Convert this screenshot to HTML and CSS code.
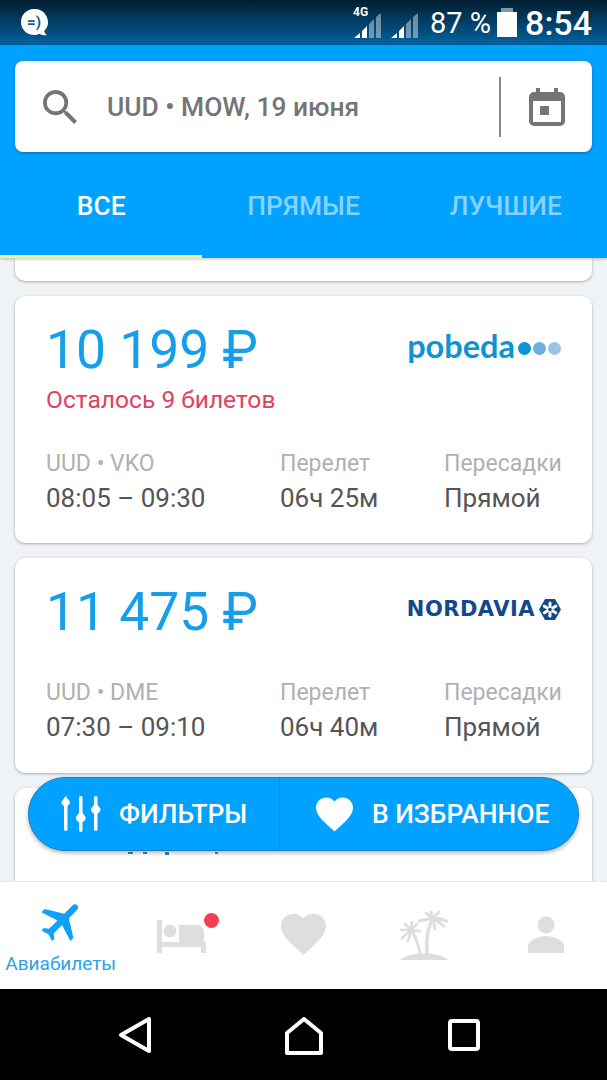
FILE: index.html
```html
<!DOCTYPE html>
<html lang="ru">
<head>
  <meta charset="UTF-8" />
  <meta name="viewport" content="width=device-width, initial-scale=1.0"/>
  <title>Авиабилеты</title>
  <link rel="stylesheet" href="styles.css">
</head>
<body>

  <div class="screen">

    <div class="status-bar">
      <svg class="bot-icon" width="30" height="30" viewBox="0 0 30 30">
        <path d="M14 1a13 13 0 1 0 0 26c2 0 4-.4 5.500-1.200 1.800 1.200 4.500 1.700 7.500 1.400-1.500-1-2.500-2.500-2.800-4.200A13 13 0 0 0 14 1z" fill="#fff"/>
        <text x="14" y="19" text-anchor="middle" class="bot-face">=)</text>
      </svg>
      <div class="status-right">
        <div class="signal signal-4g">
          <span class="net-type">4G</span>
          <svg width="30" height="27" viewBox="0 0 30 27">
            <path d="M1 26l6-5v5zM9 26v-7l5-5v12z" fill="#fff"/>
            <path d="M16 26V12l5-5v19zM23 26V5l5-4v25z" fill="#fff" opacity=".42"/>
          </svg>
        </div>
        <svg class="signal" width="30" height="27" viewBox="0 0 30 27">
          <path d="M1 26l6-5v5zM9 26v-7l5-5v12z" fill="#fff"/>
          <path d="M16 26V12l5-5v19zM23 26V5l5-4v25z" fill="#fff" opacity=".42"/>
        </svg>
        <span class="battery-text">87 %</span>
        <div class="battery"></div>
        <span class="clock">8:54</span>
      </div>
    </div>

    <div class="top-panel">
      <div class="search-box">
        <svg class="search-icon" width="34" height="34" viewBox="3 3 17.500 17.500">
          <path d="M15.500 14h-.79l-.28-.27A6.471 6.471 0 0 0 16 9.500 6.500 6.500 0 1 0 9.500 16c1.610 0 3.090-.59 4.230-1.570l.27.28v.79l5 4.990L20.490 19l-4.990-5zm-6 0C7.010 14 5 11.990 5 9.500S7.010 5 9.500 5 14 7.010 14 9.500 11.990 14 9.500 14z" fill="#757575"/>
        </svg>
        <div class="search-text">UUD • MOW, 19 июня</div>
        <div class="calendar-btn">
          <svg width="36" height="38" viewBox="0 0 36 38">
            <path d="M7 0h4v4h14V0h4v4h2a5 5 0 0 1 5 5v24a5 5 0 0 1-5 5H5a5 5 0 0 1-5-5V9a5 5 0 0 1 5-5h2z" fill="#757575"/>
            <rect x="4" y="13" width="28" height="21" fill="#fff"/>
            <rect x="11" y="18" width="9" height="9" fill="#757575"/>
          </svg>
        </div>
      </div>
      <div class="tabs">
        <div class="tab active">ВСЕ</div>
        <div class="tab">ПРЯМЫЕ</div>
        <div class="tab">ЛУЧШИЕ</div>
      </div>
    </div>

    <div class="list">
      <div class="card card-stub"></div>

      <div class="card">
        <div class="card-top">
          <div class="price">10 199 ₽</div>
          <div class="logo-pobeda">
            <span class="pobeda-name">pobeda</span>
            <span class="dot dot-1"></span>
            <span class="dot dot-2"></span>
            <span class="dot dot-3"></span>
          </div>
        </div>
        <div class="seats-left">Осталось 9 билетов</div>
        <div class="flight-info">
          <div>
            <div class="info-label">UUD • VKO</div>
            <div class="info-value">08:05 – 09:30</div>
          </div>
          <div>
            <div class="info-label">Перелет</div>
            <div class="info-value">06ч 25м</div>
          </div>
          <div>
            <div class="info-label">Пересадки</div>
            <div class="info-value">Прямой</div>
          </div>
        </div>
      </div>

      <div class="card">
        <div class="card-top">
          <div class="price">11 475 ₽</div>
          <div class="logo-nordavia">
            <span class="nordavia-name">NORDAVIA</span>
            <svg width="22" height="21" viewBox="0 0 22 21">
              <path d="M6 0h10l6 10.500L16 21H6L0 10.500z" fill="#12498a"/>
              <g stroke="#fff" stroke-width="3" stroke-linecap="round">
                <path d="M11 4v3.500M11 13.500V17M5.300 7.200l3 1.800M13.700 12l3 1.800M5.300 13.800l3-1.800M13.700 9l3-1.800"/>
              </g>
            </svg>
          </div>
        </div>
        <div class="flight-info">
          <div>
            <div class="info-label">UUD • DME</div>
            <div class="info-value">07:30 – 09:10</div>
          </div>
          <div>
            <div class="info-label">Перелет</div>
            <div class="info-value">06ч 40м</div>
          </div>
          <div>
            <div class="info-label">Пересадки</div>
            <div class="info-value">Прямой</div>
          </div>
        </div>
      </div>

      <div class="card card-cut">
        <svg class="cut-text" width="110" height="6" viewBox="0 0 110 6">
          <path d="M0 0h5v2H0zM15 0h4v2h-4zM37 0h4v3h-4zM87 0h3v2h-3z" fill="#3f86bb"/>
        </svg>
      </div>
    </div>

    <div class="fab">
      <div class="fab-part fab-filters">
        <svg width="40" height="36" viewBox="0 0 40 36">
          <g fill="#fff">
            <rect x="3" y="8" width="3.500" height="27" rx="1.700"/>
            <path d="M4.700 0 9 6a4.300 4.300 0 0 1-8.600 0z"/>
            <rect x="18" y="0" width="3.500" height="36" rx="1.700"/>
            <path d="M19.700 14l5 7.500a5 5 0 0 1-10 0z"/>
            <rect x="33" y="0" width="3.500" height="35" rx="1.700"/>
            <path d="M34.700 6l4.800 7a4.800 4.800 0 0 1-9.600 0z"/>
          </g>
        </svg>
        <span class="fab-label">ФИЛЬТРЫ</span>
      </div>
      <div class="fab-part fab-favorites">
        <svg width="37" height="35" viewBox="2 3 20 18.350">
          <path d="M12 21.350l-1.450-1.320C5.400 15.360 2 12.280 2 8.500 2 5.420 4.420 3 7.500 3c1.740 0 3.410.81 4.500 2.090C13.090 3.810 14.760 3 16.500 3 19.580 3 22 5.420 22 8.500c0 3.780-3.400 6.860-8.550 11.540L12 21.350z" fill="#fff"/>
        </svg>
        <span class="fab-label">В ИЗБРАННОЕ</span>
      </div>
    </div>

    <div class="bottom-nav">
      <div class="nav-item active">
        <svg class="nav-icon" viewBox="0 0 60 60">
          <path transform="translate(31 20.500) rotate(45) scale(2.150) translate(-11.500 -12)" d="M21 16v-2l-8-5V3.500c0-.83-.67-1.500-1.500-1.500S10 2.670 10 3.500V9l-8 5v2l8-2.500V19l-2 1.500V22l3.500-1 3.500 1v-1.500L13 19v-5.500l8 2.500z" fill="#0da2f5"/>
        </svg>
        <div class="nav-label">Авиабилеты</div>
      </div>
      <div class="nav-item">
        <svg class="nav-icon" viewBox="0 0 60 60">
          <path d="M5 20h5v22h17V25h18a7 7 0 0 1 7 7v10h2v11h-5v-6H10v6H5z" fill="#dedede"/>
          <circle cx="18" cy="31" r="6.500" fill="#dedede"/>
        </svg>
        <span class="badge"></span>
      </div>
      <div class="nav-item">
        <svg class="nav-icon" viewBox="0 0 60 60">
          <path transform="translate(3.500 8) scale(2.250) translate(0 -0.500)" d="M12 21.350l-1.450-1.320C5.400 15.360 2 12.280 2 8.500 2 5.420 4.420 3 7.500 3c1.740 0 3.410.81 4.500 2.090C13.090 3.810 14.760 3 16.500 3 19.580 3 22 5.420 22 8.500c0 3.780-3.400 6.860-8.550 11.540L12 21.350z" fill="#dedede"/>
        </svg>
      </div>
      <div class="nav-item">
        <svg class="nav-icon" viewBox="0 0 60 60">
          <path d="M5 60c10-9 39-9 48 0z" fill="#dedede"/>
          <g fill="none" stroke="#dedede" stroke-linecap="round">
            <path d="M32 53c-1-14 1-26 6-35" stroke-width="3.500"/>
            <path d="M25 53c-2-9-5-17-9-23" stroke-width="3"/>
            <path d="M38 18 24 21M38 18 31 13M38 18l-2-6M38 18l6-6M38 18l10 1M38 18l14 3M38 18l11 8M38 18l2 11" stroke-width="3"/>
            <path d="M16 30 6 30M16 30 10 24M16 30l1-8M16 30l6-6M16 30l9 1M16 30 7 38M16 30l-3 11M16 30l5 8" stroke-width="2.500"/>
          </g>
        </svg>
      </div>
      <div class="nav-item">
        <svg class="nav-icon" viewBox="0 0 60 60">
          <circle cx="30" cy="25" r="8.500" fill="#dedede"/>
          <path d="M12 53v-6c0-7 10-11 18-11s18 4 18 11v6z" fill="#dedede"/>
        </svg>
      </div>
    </div>

    <div class="system-nav">
      <svg class="sys-back" width="34" height="38" viewBox="0 0 34 38">
        <path d="M31 3v32L3 19z" fill="none" stroke="#fff" stroke-width="4" stroke-linejoin="round"/>
      </svg>
      <svg class="sys-home" width="40" height="38" viewBox="0 0 40 38">
        <path d="M4 16 21 2l17 14v20H4z" fill="none" stroke="#fff" stroke-width="4" stroke-linejoin="round"/>
      </svg>
      <svg class="sys-square" width="34" height="32" viewBox="0 0 34 32">
        <rect x="3" y="2" width="28" height="28" rx="2" fill="none" stroke="#fff" stroke-width="4"/>
      </svg>
    </div>

  </div>

</body>
</html>
```

FILE: styles.css
```css
* {
  box-sizing: border-box;
}

body {
  margin: 0;
  background: #000;
  font-family: Roboto, 'Noto Sans', sans-serif;
}

.screen {
  position: relative;
  display: flex;
  flex-direction: column;
  width: 607px;
  height: 1080px;
  overflow: hidden;
  background: #f0f3f6;
}

/* status bar */
.status-bar {
  display: flex;
  align-items: center;
  justify-content: space-between;
  height: 45px;
  padding: 0 15px 0 20px;
  background: linear-gradient(#011d30, #04629e);
  color: #fff;
}

.bot-face {
  font-family: Roboto, sans-serif;
  font-size: 15px;
  font-weight: 700;
  fill: #0b5f96;
}

.status-right {
  display: flex;
  align-items: center;
}

.signal {
  margin-right: 7px;
  margin-top: 6px;
}

.signal-4g {
  position: relative;
  height: 27px;
}

.net-type {
  position: absolute;
  left: 0;
  top: -7px;
  font-size: 12px;
  font-weight: 700;
}

.battery-text {
  margin-left: 3px;
  font-size: 29px;
}

.battery {
  position: relative;
  width: 20px;
  height: 25px;
  margin: 4px 8px 0 6px;
  background: #fff;
}

.battery::before {
  content: "";
  position: absolute;
  left: 4px;
  top: -4px;
  width: 12px;
  height: 4px;
  background: rgba(255, 255, 255, .5);
}

.clock {
  font-size: 34px;
  font-weight: 500;
}

/* search and tabs */
.top-panel {
  position: relative;
  z-index: 2;
  padding-top: 16px;
  background: #00a1ff;
  box-shadow: 0 1px 3px rgba(0, 0, 0, .25);
}

.search-box {
  display: flex;
  align-items: center;
  height: 91px;
  margin: 0 15px;
  padding-left: 28px;
  background: #fff;
  border-radius: 8px;
  box-shadow: 0 1px 3px rgba(0, 0, 0, .3);
}

.search-text {
  margin-left: 30px;
  color: #757575;
  font-size: 26.4px;
  font-weight: 500;
}

.calendar-btn {
  display: flex;
  align-items: center;
  justify-content: center;
  width: 93px;
  height: 60px;
  margin-left: auto;
  border-left: 2px solid #8a8a8a;
}

.tabs {
  display: grid;
  grid-template-columns: repeat(3, 1fr);
  height: 106px;
}

.tab {
  display: flex;
  align-items: center;
  justify-content: center;
  padding-top: 5px;
  color: rgba(255, 255, 255, .55);
  font-size: 26.4px;
  font-weight: 500;
  border-bottom: 3px solid transparent;
}

.tab.active {
  color: #fff;
  border-bottom-color: #eef58f;
}

/* ticket cards */
.list {
  display: flex;
  flex-direction: column;
  flex: 1;
  gap: 15px;
  min-height: 0;
  padding: 0 15px;
  overflow: hidden;
  border-bottom: 1px solid #e6e9ec;
}

.card {
  flex-shrink: 0;
  min-height: 215px;
  padding: 20px 31px 28px;
  background: #fff;
  border-radius: 10px;
  box-shadow: 0 1px 3px rgba(0, 0, 0, .3);
}

.card-stub {
  min-height: 0;
  height: 23px;
  padding: 0;
  border-radius: 0 0 10px 10px;
}

.card-cut {
  height: 120px;
  padding: 64px 0 0 113px;
}

.cut-text {
  display: block;
}

.card-top {
  display: flex;
  align-items: center;
  justify-content: space-between;
  height: 64px;
}

.price {
  padding-top: 4px;
  color: #159ee9;
  font-size: 53.4px;
  font-weight: 400;
  line-height: 64px;
}

.logo-pobeda {
  display: flex;
  align-items: center;
  gap: 2px;
  margin-top: -4px;
}

.pobeda-name {
  margin-right: 1px;
  color: #0f93d2;
  font-family: Lato, sans-serif;
  font-size: 32.5px;
  font-weight: 700;
  line-height: 30px;
}

.dot {
  width: 13px;
  height: 13px;
  margin-top: 4px;
  border-radius: 50%;
}

.dot-1 { background: #0f93d2; }
.dot-2 { background: #6cb0e0; }
.dot-3 { background: #9cc3e8; }

.logo-nordavia {
  display: flex;
  align-items: center;
  gap: 4px;
  margin-top: -2px;
}

.nordavia-name {
  color: #12498a;
  font-family: 'DejaVu Sans', sans-serif;
  font-size: 21px;
  font-weight: 700;
  letter-spacing: .5px;
}

.seats-left {
  margin-top: 7px;
  color: #e0415f;
  font-size: 24.6px;
  line-height: 26px;
}

.flight-info {
  display: grid;
  grid-template-columns: 234px 164px 1fr;
  margin-top: 34px;
}

.info-label {
  color: #b0b0b0;
  font-size: 23px;
  line-height: 34px;
}

.info-value {
  color: #555;
  font-size: 26px;
  line-height: 34px;
}

/* floating button */
.fab {
  position: absolute;
  left: 28px;
  top: 777px;
  z-index: 3;
  display: flex;
  width: 551px;
  height: 74px;
  background: #00a1ff;
  border: 1px solid #1a80bf;
  border-radius: 37px;
  box-shadow: 0 2px 4px rgba(0, 0, 0, .3);
  color: #fff;
}

.fab-part {
  display: flex;
  align-items: center;
  height: 100%;
}

.fab-filters {
  width: 251px;
  padding-left: 32px;
  border-right: 1px solid #1a80bf;
}

.fab-favorites {
  flex: 1;
  padding-left: 36px;
}

.fab-filters .fab-label {
  margin-left: 18px;
}

.fab-favorites .fab-label {
  margin-left: 19px;
}

.fab-label {
  font-size: 26.4px;
  font-weight: 500;
}

/* bottom navigation */
.bottom-nav {
  display: grid;
  grid-template-columns: repeat(5, 1fr);
  height: 107px;
  background: #fff;
}

.nav-item {
  position: relative;
  display: flex;
  flex-direction: column;
  align-items: center;
  padding-top: 18px;
}

.nav-icon {
  width: 60px;
  height: 60px;
  flex-shrink: 0;
}

.nav-label {
  margin-top: -8px;
  color: #2ba3e8;
  font-size: 19px;
  line-height: 24px;
  white-space: nowrap;
}

.badge {
  position: absolute;
  left: 83px;
  top: 31px;
  width: 15px;
  height: 15px;
  background: #f43f55;
  border-radius: 50%;
}

/* system buttons */
.system-nav {
  display: flex;
  align-items: center;
  height: 91px;
  padding-left: 118px;
  background: #000;
}

.sys-back {
  margin-right: 131px;
}

.sys-home {
  margin-top: 2px;
  margin-right: 124px;
}
```
